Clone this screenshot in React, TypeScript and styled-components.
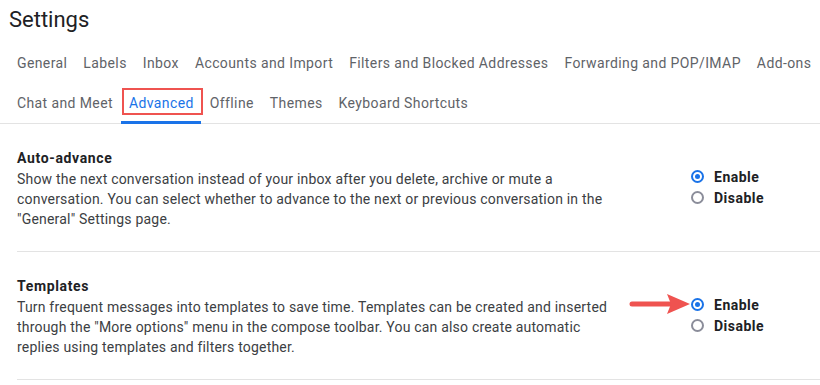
import React from "react";
import styled, { createGlobalStyle } from "styled-components";

const Global = createGlobalStyle`
  html, body { margin: 0; padding: 0; background: #fff; }
  body { font-family: Roboto, "Liberation Sans", Arial, sans-serif; color: #202124; -webkit-font-smoothing: antialiased; }
  * { box-sizing: border-box; }
`;

const Page = styled.div`
  width: 820px;
  height: 385px;
  overflow: hidden;
  background: #fff;
`;

const Title = styled.h1`
  margin: 0;
  padding: 6px 0 0 9px;
  height: 43px;
  font-size: 22px;
  line-height: 28px;
  font-weight: 400;
  color: #202124;
`;

const TabBar = styled.nav`
  display: flex;
  flex-wrap: wrap;
  padding: 0 0 0 9px;
  border-bottom: 1px solid #e3e3e3;
  width: 820px;
`;

const Tab = styled.div<{ $active?: boolean }>`
  position: relative;
  height: 40px;
  padding: 0 8px;
  display: flex;
  align-items: center;
  font-size: 14px;
  letter-spacing: 0.39px;
  white-space: nowrap;
  color: ${(p) => (p.$active ? "#1a73e8" : "#5f6368")};
  &::after {
    content: "";
    position: absolute;
    left: 0;
    right: 1px;
    bottom: -1px;
    height: 3px;
    background: ${(p) => (p.$active ? "#1a73e8" : "transparent")};
  }
`;

const Highlight = styled.span`
  position: absolute;
  left: 1px;
  right: -1px;
  top: 5px;
  bottom: 8px;
  border: 2px solid #ef5350;
  pointer-events: none;
`;

const Section = styled.section`
  display: grid;
  grid-template-columns: 674px 1fr;
  margin-left: 17px;
  padding: 24px 0 22px;
  border-bottom: 1px solid #e3e3e3;
`;

const Info = styled.div`
  max-width: 600px;
`;

const Heading = styled.div`
  font-size: 14px;
  font-weight: 700;
  line-height: 21px;
  letter-spacing: 0.65px;
  color: #202124;
`;

const Desc = styled.div`
  font-size: 14px;
  line-height: 20px;
  letter-spacing: 0.2px;
  color: #3c4043;
`;

const Options = styled.div`
  padding-top: 18px;
  display: flex;
  flex-direction: column;
`;

const Option = styled.label`
  position: relative;
  display: flex;
  align-items: center;
  gap: 10px;
  height: 21px;
  font-size: 14px;
  font-weight: 700;
  letter-spacing: 0.5px;
  color: #202124;
`;

const Radio = styled.span<{ $checked?: boolean }>`
  width: 13px;
  height: 13px;
  border-radius: 50%;
  border: 2px solid ${(p) => (p.$checked ? "#1a73e8" : "#8b8d9a")};
  display: flex;
  align-items: center;
  justify-content: center;
  &::after {
    content: "";
    width: 5px;
    height: 5px;
    border-radius: 50%;
    background: ${(p) => (p.$checked ? "#1a73e8" : "transparent")};
  }
`;

const Arrow = styled.svg`
  position: absolute;
  right: calc(100% - 1px);
  top: -1px;
  width: 63px;
  height: 22px;
`;

type Item = { title: string; text: string; arrow?: boolean };

const items: Item[] = [
  {
    title: "Auto-advance",
    text: 'Show the next conversation instead of your inbox after you delete, archive or mute a conversation. You can select whether to advance to the next or previous conversation in the "General" Settings page.',
  },
  {
    title: "Templates",
    text: 'Turn frequent messages into templates to save time. Templates can be created and inserted through the "More options" menu in the compose toolbar. You can also create automatic replies using templates and filters together.',
    arrow: true,
  },
];

const tabs = [
  "General",
  "Labels",
  "Inbox",
  "Accounts and Import",
  "Filters and Blocked Addresses",
  "Forwarding and POP/IMAP",
  "Add-ons",
  "Chat and Meet",
  "Advanced",
  "Offline",
  "Themes",
  "Keyboard Shortcuts",
];

export default function App() {
  return (
    <Page>
      <Global />
      <Title>Settings</Title>
      <TabBar>
        {tabs.map((t) => (
          <Tab key={t} $active={t === "Advanced"}>
            {t}
            {t === "Advanced" && <Highlight />}
          </Tab>
        ))}
      </TabBar>
      {items.map((it) => (
        <Section key={it.title}>
          <Info>
            <Heading>{it.title}</Heading>
            <Desc>{it.text}</Desc>
          </Info>
          <Options>
            <Option>
              {it.arrow && (
                <Arrow viewBox="0 0 63 22">
                  <line x1="3" y1="11" x2="44" y2="11" stroke="#ef5350" strokeWidth="5" strokeLinecap="round" />
                  <polygon points="38,1 61,11 38,21 42,11" fill="#ef5350" />
                </Arrow>
              )}
              <Radio $checked />
              Enable
            </Option>
            <Option>
              <Radio />
              Disable
            </Option>
          </Options>
        </Section>
      ))}
    </Page>
  );
}
